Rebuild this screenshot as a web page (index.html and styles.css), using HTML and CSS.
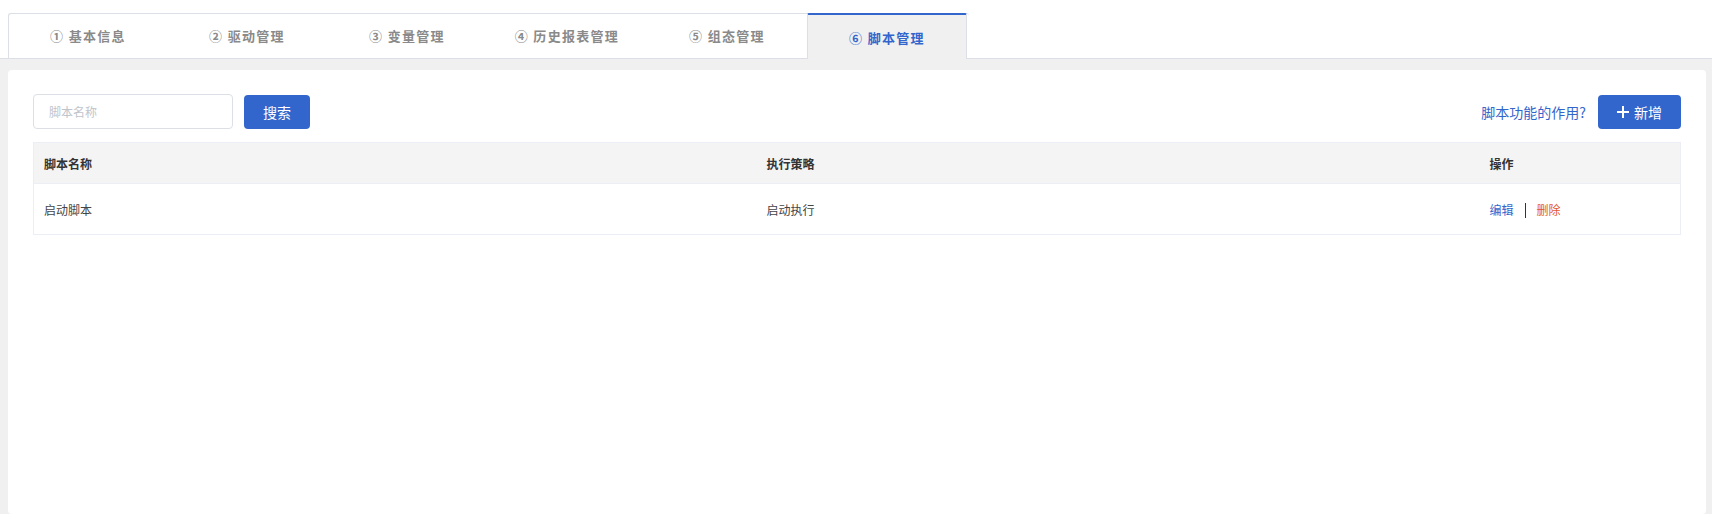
FILE: index.html
```html
<!DOCTYPE html>
<html lang="zh-CN">
<head>
    <meta charset="UTF-8">
    <meta name="viewport" content="width=device-width, initial-scale=1.0">
    <title>脚本管理</title>
    <link rel="stylesheet" href="styles.css">
</head>
<body>
    <!-- 顶部标签页 -->
    <div class="tab-bar">
        <ul class="tabs">
            <li class="tab">① 基本信息</li>
            <li class="tab">② 驱动管理</li>
            <li class="tab">③ 变量管理</li>
            <li class="tab">④ 历史报表管理</li>
            <li class="tab">⑤ 组态管理</li>
            <li class="tab active">⑥ 脚本管理</li>
        </ul>
    </div>

    <div class="main">
        <div class="card">
            <!-- 搜索栏 -->
            <div class="toolbar">
                <div class="search">
                    <input class="search-input" type="text" placeholder="脚本名称">
                    <button class="btn">搜索</button>
                </div>
                <div class="actions">
                    <a class="help-link">脚本功能的作用?</a>
                    <button class="btn btn-add"><span class="plus"></span>新增</button>
                </div>
            </div>

            <!-- 脚本列表 -->
            <table class="list">
                <colgroup>
                    <col>
                    <col>
                    <col class="col-op">
                </colgroup>
                <thead>
                    <tr>
                        <th>脚本名称</th>
                        <th>执行策略</th>
                        <th>操作</th>
                    </tr>
                </thead>
                <tbody>
                    <tr>
                        <td>启动脚本</td>
                        <td>启动执行</td>
                        <td>
                            <a class="op-edit">编辑</a><span class="op-sep"></span><a class="op-del">删除</a>
                        </td>
                    </tr>
                </tbody>
            </table>
        </div>
    </div>
</body>
</html>
```

FILE: styles.css
```css
*{
    margin: 0;
    padding: 0;
    box-sizing: border-box;
}
html,body{
    height: 100%;
}
body{
    overflow: hidden;
    background-color: #f0f0f0;
    font-family: "Noto Sans CJK SC", "Liberation Sans", sans-serif;
    color: #333;
}
.tab-bar{
    background-color: #fff;
    padding: 13px 0 0 8px;
    border-bottom: 1px solid #dcdfe6;
}
.tabs{
    display: flex;
    list-style: none;
    width: 961px;
    border-top: 1px solid #dcdfe6;
    border-left: 1px solid #dcdfe6;
    border-radius: 3px 3px 0 0;
    margin-bottom: -1px;
}
.tab{
    width: 160px;
    height: 45px;
    line-height: 44px;
    text-align: center;
    font-size: 13px;
    font-weight: bold;
    letter-spacing: 1.3px;
    color: #8a8a8a;
}
.tab:first-child{
    width: 158px;
}
.tab.active{
    margin-top: -1px;
    height: 46px;
    line-height: 45px;
    color: #3366cc;
    background-color: #f0f0f0;
    border-top: 2px solid #3366cc;
    border-left: 1px solid #dcdfe6;
    border-right: 1px solid #dcdfe6;
    border-radius: 2px 2px 0 0;
}
.main{
    padding: 11px 6px 0 8px;
    height: calc(100% - 59px);
}
.card{
    height: 100%;
    background-color: #fff;
    border-radius: 4px;
    padding: 24px 25px;
}
.toolbar{
    display: flex;
    justify-content: space-between;
    align-items: center;
}
.search{
    display: flex;
    align-items: center;
}
.search-input{
    width: 200px;
    height: 35px;
    border: 1px solid #dcdfe6;
    border-radius: 4px;
    padding-left: 15px;
    font-family: inherit;
    font-size: 12px;
    outline: none;
}
.search-input::placeholder{
    color: #c0c4cc;
}
.btn{
    height: 34px;
    width: 66px;
    margin-left: 11px;
    border: 0;
    border-radius: 4px;
    background-color: #3366cc;
    color: #fff;
    font-family: inherit;
    font-size: 14px;
}
.actions{
    display: flex;
    align-items: center;
}
.help-link{
    font-size: 14px;
    color: #3366cc;
    margin-right: 12px;
}
.btn-add{
    width: 83px;
    margin-left: 0;
    display: flex;
    align-items: center;
    justify-content: center;
}
.plus{
    position: relative;
    width: 12px;
    height: 12px;
    margin-right: 5px;
}
.plus::before,.plus::after{
    content: "";
    position: absolute;
    background-color: #fff;
}
.plus::before{
    left: 0;
    top: 5px;
    width: 12px;
    height: 2px;
}
.plus::after{
    left: 5px;
    top: 0;
    width: 2px;
    height: 12px;
}
.list{
    width: 100%;
    margin-top: 13px;
    border-collapse: collapse;
    table-layout: fixed;
    border: 1px solid #ebeef5;
    font-size: 12px;
}
.col-op{
    width: 201px;
}
.list th{
    height: 41px;
    text-align: left;
    padding-left: 10px;
    background-color: #f4f4f4;
    font-weight: bold;
    color: #333;
    border-bottom: 1px solid #ebeef5;
}
.list td{
    height: 51px;
    padding-left: 10px;
    color: #444;
}
.op-edit{
    color: #3366cc;
}
.op-del{
    color: #e4572e;
}
.op-sep{
    display: inline-block;
    width: 1px;
    height: 15px;
    margin: 0 11px;
    background-color: #333;
    vertical-align: -3px;
}
```
